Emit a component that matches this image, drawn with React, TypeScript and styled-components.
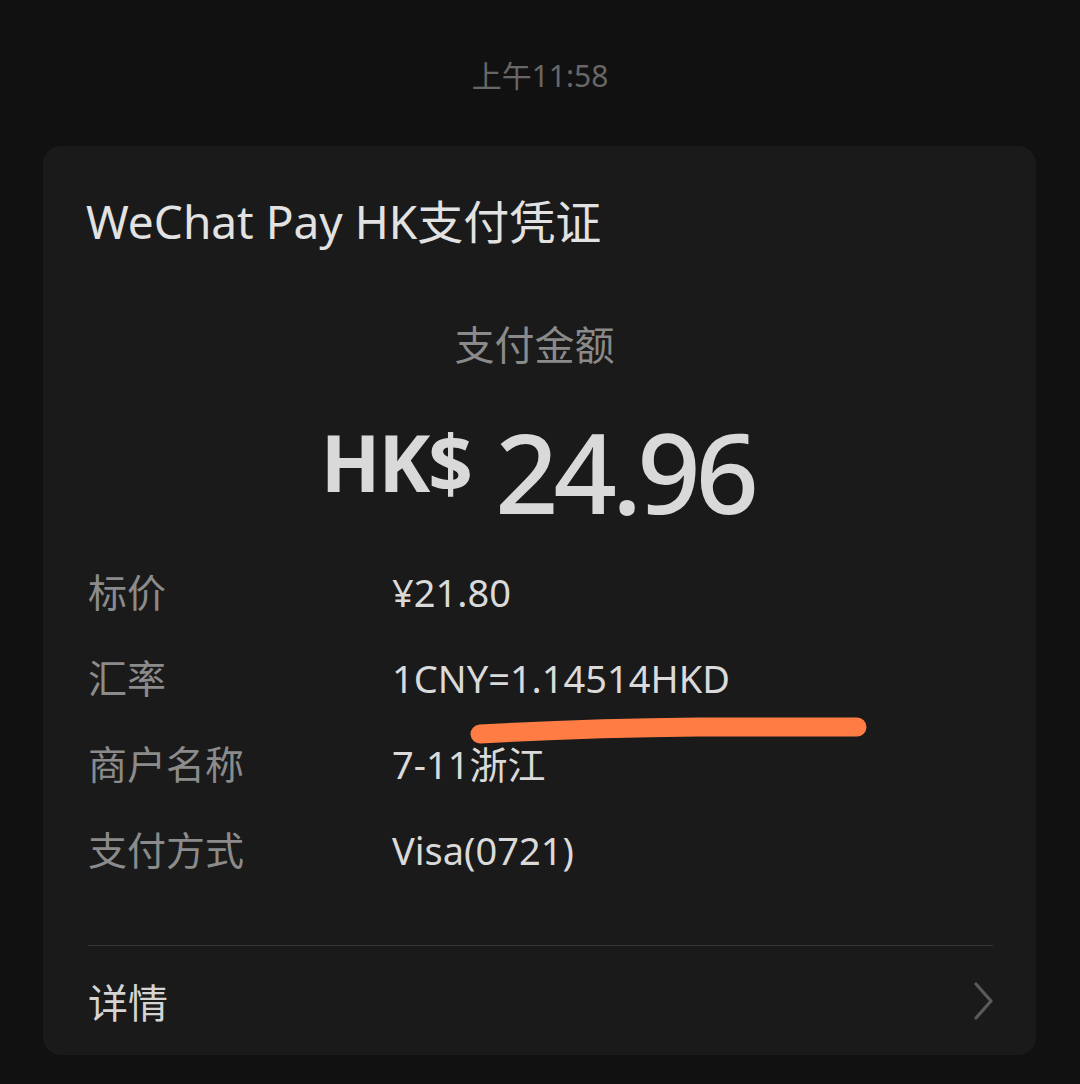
import React from "react";
import styled, { createGlobalStyle } from "styled-components";

const Global = createGlobalStyle`
  html, body {
    margin: 0;
    padding: 0;
    background: #111111;
  }
  body {
    font-family: "Noto Sans", "Noto Sans CJK SC", sans-serif;
    -webkit-font-smoothing: antialiased;
  }
`;

const Page = styled.div`
  width: 1080px;
  height: 1084px;
  background: #111111;
  display: flex;
  flex-direction: column;
  align-items: flex-start;
  overflow: hidden;
`;

const Time = styled.div`
  width: 100%;
  text-align: center;
  font-size: 30px;
  line-height: 40px;
  color: #676767;
  margin-top: 56px;
`;

const Card = styled.div`
  box-sizing: border-box;
  width: 993px;
  margin: 50px 0 0 43px;
  background: #1a1a1a;
  border-radius: 18px;
  padding: 47px 43px 0 45px;
  display: flex;
  flex-direction: column;
`;

const Title = styled.div`
  font-size: 46px;
  line-height: 56px;
  color: #e2e2e2;
  margin-left: -2px;
`;

const AmountLabel = styled.div`
  margin-top: 72px;
  text-align: center;
  font-size: 40px;
  line-height: 48px;
  color: #8a8a8a;
  padding-right: 12px;
`;

const AmountRow = styled.div`
  margin-top: 47px;
  display: flex;
  justify-content: center;
  align-items: flex-start;
  gap: 24px;
  color: #d9d9d9;
  padding-right: 6px;
`;

const Currency = styled.span`
  font-weight: 700;
  font-size: 78px;
  line-height: 78px;
  margin-top: 7px;
  letter-spacing: -2px;
`;

const Value = styled.span`
  font-weight: 500;
  font-size: 111px;
  line-height: 111px;
  letter-spacing: -5px;
`;

const Rows = styled.div`
  margin-top: 22px;
  display: flex;
  flex-direction: column;
`;

const Row = styled.div`
  position: relative;
  display: flex;
  align-items: baseline;
  height: 86px;
  line-height: 86px;
  font-size: 38px;
`;

const Label = styled.span`
  width: 304px;
  flex: none;
  color: #8b8b8b;
  font-size: 39px;
`;

const RowValue = styled.span`
  color: #dadada;
`;

const Mark = styled.svg`
  position: absolute;
  left: 370px;
  top: 60px;
  overflow: visible;
  pointer-events: none;
`;

const Divider = styled.div`
  margin-top: 52px;
  height: 1px;
  background: #363636;
`;

const Details = styled.div`
  height: 109px;
  display: flex;
  align-items: center;
  justify-content: space-between;
`;

const DetailsText = styled.span`
  font-size: 40px;
  color: #d4d4d4;
`;

const Chevron = styled.svg`
  margin-right: -2px;
`;

const rows = [
  { label: "标价", value: "¥21.80" },
  { label: "汇率", value: "1CNY=1.14514HKD", mark: true },
  { label: "商户名称", value: "7-11浙江" },
  { label: "支付方式", value: "Visa(0721)" },
];

export default function App() {
  return (
    <Page>
      <Global />
      <Time>上午11:58</Time>
      <Card>
        <Title>WeChat Pay HK支付凭证</Title>
        <AmountLabel>支付金额</AmountLabel>
        <AmountRow>
          <Currency>HK$</Currency>
          <Value>24.96</Value>
        </AmountRow>
        <Rows>
          {rows.map((r) => (
            <Row key={r.label}>
              <Label>{r.label}</Label>
              <RowValue>{r.value}</RowValue>
              {r.mark && (
                <Mark width="420" height="50" viewBox="0 0 420 50">
                  <path
                    d="M 22 39 Q 130 33 240 32 L 399 32"
                    fill="none"
                    stroke="#ff7d45"
                    strokeWidth="19"
                    strokeLinecap="round"
                  />
                </Mark>
              )}
            </Row>
          ))}
        </Rows>
        <Divider />
        <Details>
          <DetailsText>详情</DetailsText>
          <Chevron width="22" height="38" viewBox="0 0 22 38">
            <path d="M 3 2 L 18 19 L 3 36" fill="none" stroke="#5a5a5a" strokeWidth="3.2" strokeLinecap="round" strokeLinejoin="round" />
          </Chevron>
        </Details>
      </Card>
    </Page>
  );
}
